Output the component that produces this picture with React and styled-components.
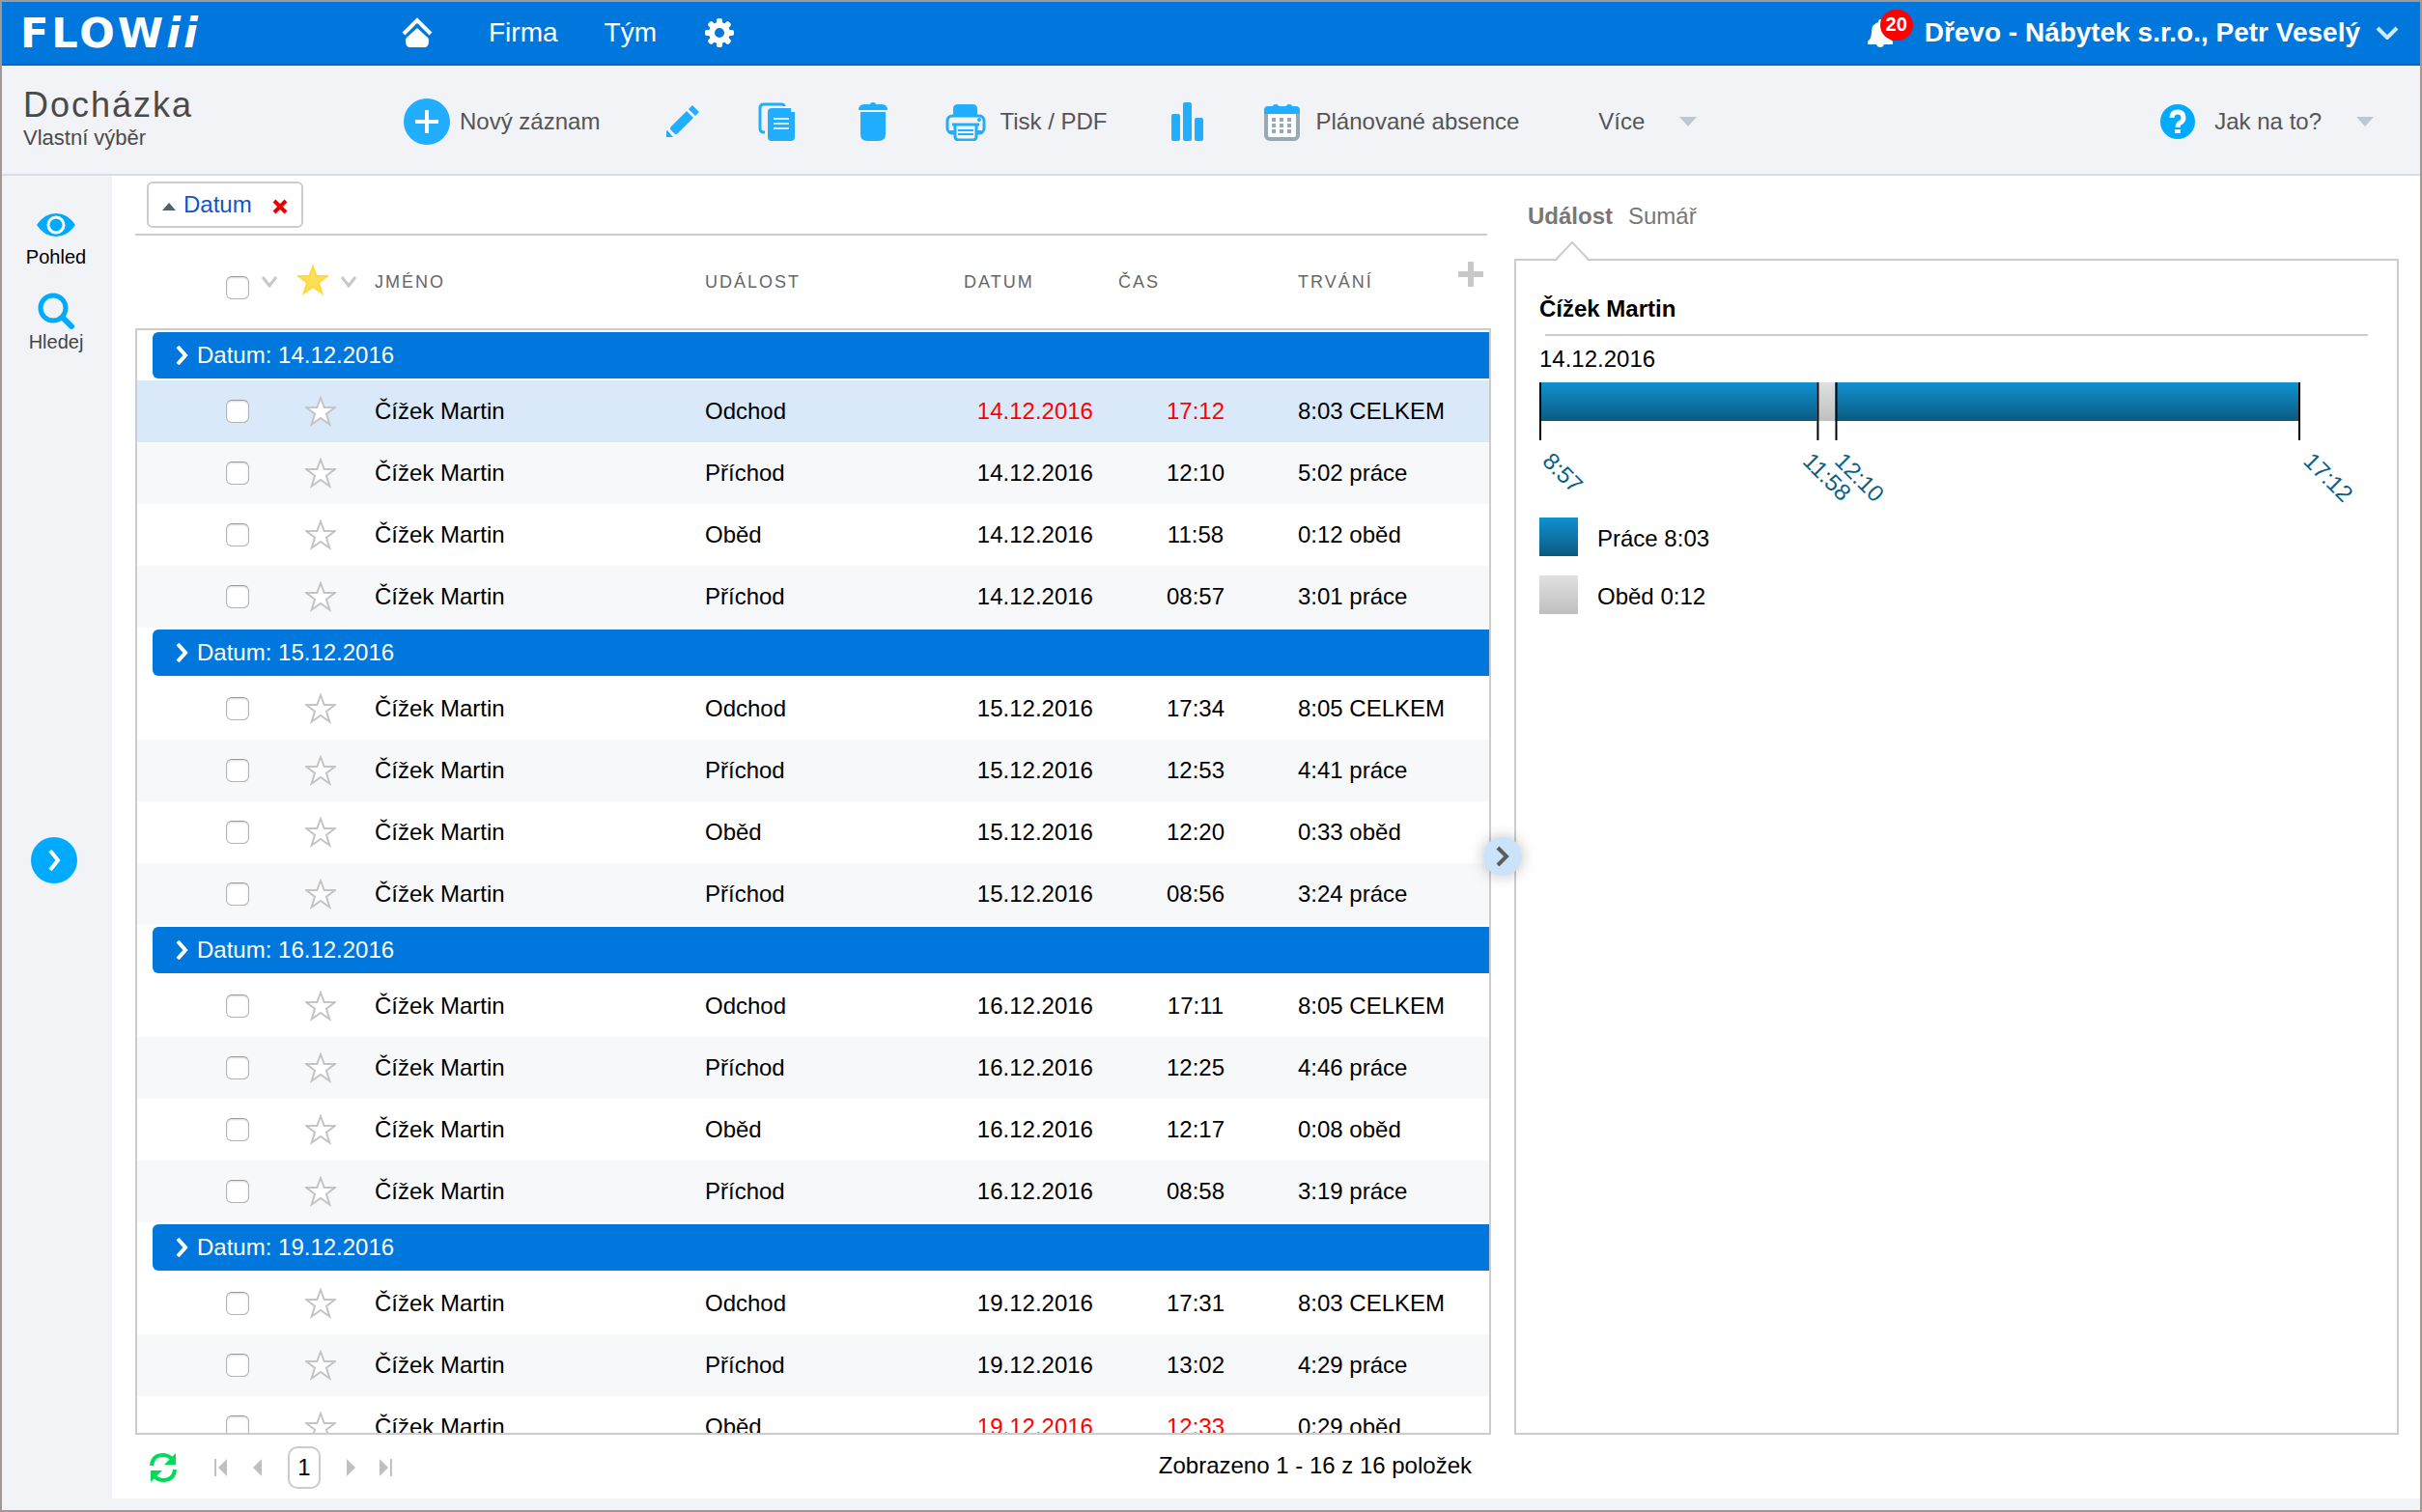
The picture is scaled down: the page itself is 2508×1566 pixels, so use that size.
import React from "react";
import styled, { createGlobalStyle } from "styled-components";

const GlobalStyle = createGlobalStyle`
  *, *::before, *::after { box-sizing: border-box; }
  body {
    margin: 0;
    font-family: "Liberation Sans", Arial, Helvetica, sans-serif;
    font-size: 24px;
    line-height: 28px;
    color: #000;
    background: #f1f3f7;
  }
  button, input { font: inherit; color: inherit; }
  a { color: inherit; text-decoration: none; }
  svg { display: block; flex: none; }
`;

const PlainButton = styled.button`
  display: flex;
  align-items: center;
  gap: ${(p) => p.$gap || 0}px;
  margin: 0;
  padding: 0;
  border: 0;
  background: none;
  text-align: left;
  white-space: nowrap;
  cursor: pointer;
`;

const Frame = styled.div`
  display: flex;
  flex-direction: column;
  height: 100vh;
  border: 2px solid #a09896;
  overflow: hidden;
`;

/* ---------- top bar ---------- */

const TopBar = styled.header`
  flex: none;
  display: flex;
  align-items: center;
  height: 66px;
  padding: 0 22px 0 20px;
  background: #0077dd;
  border-bottom: 2px solid #0068c8;
  color: #fff;
  font-size: 28px;
  line-height: 32px;
`;

const LogoLink = styled.a`
  flex: none;
  width: 394px;
`;

const MainNav = styled.nav`
  display: flex;
  align-items: center;
  flex: 1;
`;

const NavLink = styled.a`
  margin-right: ${(p) => p.$after}px;
`;

const Account = styled.div`
  display: flex;
  align-items: center;
  font-weight: bold;
`;

const BellButton = styled(PlainButton)`
  position: relative;
  width: 60px;
  height: 44px;
`;

const Badge = styled.span`
  position: absolute;
  left: 14px;
  top: -2px;
  width: 34px;
  height: 32px;
  border-radius: 16px;
  background: #ff0000;
  font-size: 20px;
  line-height: 30px;
  text-align: center;
`;

/* ---------- tool bar ---------- */

const ToolBar = styled.div`
  flex: none;
  display: flex;
  align-items: center;
  height: 114px;
  padding: 4px 48px 0 22px;
  background: #f1f3f7;
  border-bottom: 2px solid #d5dfea;
  color: #555;
`;

const PageTitle = styled.div`
  width: 394px;
  padding-bottom: 6px;
  color: #4a4a4a;
`;

const Title = styled.h1`
  margin: 0;
  font-size: 36px;
  line-height: 40px;
  font-weight: normal;
  letter-spacing: 2px;
`;

const Subtitle = styled.div`
  font-size: 22px;
  line-height: 28px;
`;

const Tools = styled.div`
  display: flex;
  align-items: center;
  flex: 1;
`;

const Tool = styled(PlainButton)`
  margin-right: ${(p) => p.$after || 0}px;
`;

const HelpLabel = styled.span`
  display: flex;
  align-items: center;
  gap: 20px;
`;

/* ---------- page body ---------- */

const Body = styled.div`
  flex: 1;
  min-height: 0;
  display: flex;
  padding-bottom: 12px;
  background: #f1f3f7;
`;

const SideBar = styled.aside`
  position: relative;
  flex: none;
  width: 114px;
  padding: 38px 2px 0 0;
  display: flex;
  flex-direction: column;
  align-items: center;
  gap: 24px;
`;

const SideItem = styled(PlainButton)`
  flex-direction: column;
  justify-content: space-between;
  height: ${(p) => p.$height}px;
  color: ${(p) => p.$color};
  font-size: 20px;
  line-height: 24px;
`;

const RoundToggle = styled.button`
  position: absolute;
  top: 50%;
  left: ${(p) => p.$left};
  display: flex;
  align-items: center;
  justify-content: center;
  width: ${(p) => p.$size}px;
  height: ${(p) => p.$size}px;
  padding: 0;
  border: 0;
  border-radius: 50%;
  background: ${(p) => p.$bg};
  box-shadow: ${(p) => p.$shadow || "none"};
  cursor: pointer;
`;

const Content = styled.main`
  flex: 1;
  min-width: 0;
  display: flex;
  padding: 0 22px 0 24px;
  background: #fff;
`;

const ListPane = styled.section`
  flex: 1404 1 0;
  min-width: 0;
  display: flex;
  flex-direction: column;
`;

const Divider = styled.div`
  position: relative;
  flex: none;
  width: 24px;
`;

const GroupBar = styled.div`
  flex: none;
  height: 62px;
  margin-right: 4px;
  padding: 6px 12px;
  border-bottom: 2px solid #ccc;
`;

const Chip = styled.div`
  display: flex;
  align-items: center;
  width: 162px;
  height: 48px;
  padding: 4px 14px 0;
  border: 2px solid #ccc;
  border-radius: 6px;
`;

const ChipLabel = styled.a`
  flex: 1;
  margin-left: 8px;
  padding-bottom: 4px;
  color: #1155cc;
`;

const Table = styled.table`
  width: 100%;
  table-layout: fixed;
  border-collapse: collapse;
`;

const Col = styled.col`
  width: ${(p) => (p.$w ? `${p.$w}px` : "auto")};
`;

const HeadBox = styled.div`
  flex: none;
  height: 96px;
  padding: 0 2px;
`;

const HeadCell = styled.th`
  height: 96px;
  padding: 0;
  font-size: 18px;
  line-height: 24px;
  font-weight: normal;
  letter-spacing: 2px;
  text-align: left;
  color: #666;
`;

const HeadControls = styled.div`
  display: flex;
  align-items: ${(p) => p.$align};
  gap: 12px;
  height: 36px;
`;

const HeadMenu = styled(PlainButton)`
  align-self: center;
`;

const HeadLast = styled.div`
  display: flex;
  align-items: center;
  justify-content: space-between;
  padding-right: 6px;
`;

const AddColumn = styled(PlainButton)`
  padding-bottom: 16px;
`;

const Rows = styled.div`
  flex: 1;
  min-height: 0;
  overflow: hidden;
  border: 2px solid #ccc;
`;

const GroupCell = styled.td`
  height: 52px;
  padding: 2px 0 2px 16px;
`;

const GroupButton = styled(PlainButton)`
  width: 100%;
  height: 48px;
  padding-left: 24px;
  border-radius: 6px 0 0 6px;
  background: #0077dd;
  color: #fff;
`;

const Row = styled.tr`
  height: 64px;
  background: ${(p) => (p.$selected ? "#d9e9f9" : p.$odd ? "#fff" : "#f7f8fa")};
`;

const Cell = styled.td`
  padding: 0;
  padding-right: ${(p) => p.$right || 0}px;
  text-align: ${(p) => p.$align || "left"};
  color: ${(p) => (p.$alert ? "#ff0000" : "#000")};
  white-space: nowrap;
`;

const Check = styled.input`
  appearance: none;
  display: block;
  width: 24px;
  height: 24px;
  margin: 0;
  border: 1px solid #b4b4b4;
  border-top-color: #999;
  border-radius: 6px;
  background: #fff;
  box-shadow: inset 0 1px 2px rgba(0, 0, 0, 0.15);
`;

const Footer = styled.footer`
  flex: none;
  display: flex;
  align-items: center;
  height: 66px;
  padding: 2px 20px 0 14px;
`;

const Pager = styled.nav`
  display: flex;
  align-items: center;
  flex: 1;
  margin-left: 38px;
`;

const PageBox = styled(PlainButton)`
  justify-content: center;
  width: 34px;
  height: 44px;
  margin: 0 26px;
  border: 2px solid #ccc;
  border-radius: 10px;
`;

const Count = styled.div`
  padding-bottom: 4px;
`;

/* ---------- detail pane ---------- */

const DetailPane = styled.section`
  flex: 916 1 0;
  min-width: 0;
  display: flex;
  flex-direction: column;
  padding-bottom: 66px;
`;

const Tabs = styled.div`
  flex: none;
  display: flex;
  gap: 16px;
  height: 86px;
  padding: 28px 14px 0;
`;

const Tab = styled(PlainButton)`
  position: relative;
  height: 28px;
  color: #777;
  font-weight: ${(p) => (p.$active ? "bold" : "normal")};
`;

const Notch = styled.svg`
  position: absolute;
  left: 50%;
  top: 40px;
  margin-left: -16px;
`;

const Detail = styled.div`
  flex: 1;
  min-height: 0;
  border: 2px solid #ccc;
  padding: 36px 30px 0 24px;
`;

const PersonName = styled.h2`
  margin: 0;
  padding-bottom: 12px;
  font-size: 24px;
  line-height: 28px;
`;

const Rule = styled.hr`
  margin: 0 0 0 6px;
  border: 0;
  border-top: 2px solid #ccc;
`;

const Day = styled.div`
  padding: 10px 0;
`;

const ChartBox = styled.div`
  height: 140px;
  padding-right: 72px;
`;

const Legend = styled.ul`
  display: flex;
  flex-direction: column;
  gap: 20px;
  margin: 0;
  padding: 0;
  list-style: none;
`;

const LegendItem = styled.li`
  display: flex;
  align-items: center;
  gap: 20px;
  height: 40px;
`;

const Swatch = styled.span`
  width: 40px;
  height: 40px;
  background: ${(p) => p.$fill};
`;

const LegendLabel = styled.span`
  padding-top: 4px;
`;

/* ---------- icons ---------- */

const Star = ({ filled }) => (
  <svg width="32" height="32" viewBox="0 0 32 32">
    <path
      d="M16 2l3.700 10H31l-9 6.600 3.300 11L16 23l-9.300 6.600L10 18.600 1 12h11.300z"
      fill={filled ? "#ffdf5a" : "#fff"}
      stroke={filled ? "#ffd83e" : "#c4c4c4"}
      strokeWidth="2"
    />
  </svg>
);

const Chevron = ({ w, h, d, color, sw }) => (
  <svg width={w} height={h} viewBox={`0 0 ${w} ${h}`}>
    <path d={d} fill="none" stroke={color} strokeWidth={sw} />
  </svg>
);

const DownMark = ({ label }) => (
  <HeadMenu aria-label={label}>
    <Chevron w={18} h={12} d="M2 1l7 9 7-9" color="#c8c8c8" sw={3} />
  </HeadMenu>
);

const DropTriangle = () => (
  <svg width="18" height="10" viewBox="0 0 18 10">
    <path d="M0 0h18L9 10z" fill="#bcc8d0" />
  </svg>
);

const Logo = () => (
  <svg width="230" height="60" viewBox="0 0 230 60" role="img" aria-label="FLOWii">
    <text
      x="-1"
      y="45"
      fill="#fff"
      fontFamily="DejaVu Sans, sans-serif"
      fontWeight="bold"
      fontSize="43"
      letterSpacing="3"
    >
      FLOW<tspan fontStyle="oblique">ii</tspan>
    </text>
  </svg>
);

const HomeIcon = () => (
  <svg width="32" height="32" viewBox="0 0 32 32">
    <path d="M2 17L16 3l14 14" fill="none" stroke="#fff" strokeWidth="4" />
    <path d="M16 11l11 10q1 1 1 3 0 7-4 7H8q-4 0-4-7 0-2 1-3z" fill="#fff" />
  </svg>
);

const GearIcon = () => (
  <svg width="30" height="32" viewBox="-15 -16 30 32">
    {[0, 45, 90, 135, 180, 225, 270, 315].map((a) => (
      <rect key={a} x="-3" y="-15" width="6" height="8" rx="2" fill="#fff" transform={`rotate(${a})`} />
    ))}
    <circle r="8" fill="none" stroke="#fff" strokeWidth="6" />
  </svg>
);

const BellIcon = () => (
  <svg width="28" height="32" viewBox="0 0 28 32">
    <path d="M14 2q2 0 2 3 7 2 7 10 0 7 4 10v3H1v-3q4-3 4-10 0-8 7-10 0-3 2-3z" fill="#fff" />
    <path d="M10 28h8q-1 3-4 3t-4-3z" fill="#fff" />
  </svg>
);

const PlusCircle = () => (
  <svg width="48" height="48" viewBox="0 0 48 48">
    <circle cx="24" cy="24" r="24" fill="#22aeff" />
    <path d="M24 12v24M12 24h24" stroke="#fff" strokeWidth="4" />
  </svg>
);

const PencilIcon = () => (
  <svg width="36" height="36" viewBox="0 0 36 36">
    <path d="M22 7l7 7L13 30q-2 2-4 0l-3-3q-2-2 0-4zM24 5l4-4 7 7-4 4zM2 27l6 7H1v-5q0-2 1-2z" fill="#22aeff" />
  </svg>
);

const CopyIcon = () => (
  <svg width="40" height="40" viewBox="0 0 40 40">
    <path d="M7 31H6q-4 0-4-4V6q0-4 4-4h18q3 0 3 2" fill="none" stroke="#22aeff" strokeWidth="3" />
    <path d="M14 6h20v4h4v26q0 4-4 4H14q-4 0-4-4V10q0-4 4-4z" fill="#22aeff" />
    <path d="M16 17h16M16 22h16M16 27h16" stroke="#d3edff" strokeWidth="2" />
  </svg>
);

const TrashIcon = () => (
  <svg width="30" height="40" viewBox="0 0 30 40">
    <path d="M0 8q0-6 6-6h6q0-2 3-2t3 2h6q6 0 6 6zM2 10h26v23q0 7-7 7H9q-7 0-7-7z" fill="#22aeff" />
  </svg>
);

const PrinterIcon = () => (
  <svg width="42" height="40" viewBox="0 0 42 40">
    <path d="M8 14V7q0-5 5-5h15q5 0 5 5v7z" fill="#22aeff" />
    <rect x="2" y="14" width="38" height="18" rx="5" fill="#f1f3f7" stroke="#22aeff" strokeWidth="3" />
    <path d="M4 29h7v3H6zM31 29h7l-2 3h-5z" fill="#22aeff" />
    <path d="M7 23h28M10 24v11q0 4 4 4h14q4 0 4-4V24" fill="#f1f3f7" stroke="#22aeff" strokeWidth="3" />
    <path d="M13 29h16M13 33h16" stroke="#22aeff" strokeWidth="2" />
    <circle cx="35" cy="18" r="2" fill="#22aeff" />
  </svg>
);

const BarsIcon = () => (
  <svg width="34" height="40" viewBox="0 0 34 40" fill="#22aeff">
    <rect x="0" y="12" width="9" height="28" rx="2" />
    <rect x="12" y="0" width="9" height="40" rx="2" />
    <rect x="24" y="16" width="9" height="24" rx="2" />
  </svg>
);

const CalendarIcon = () => (
  <svg width="38" height="40" viewBox="0 0 38 40">
    <rect x="2" y="6" width="33" height="32" rx="4" fill="#fff" stroke="#94aab4" strokeWidth="4" />
    <path d="M0 12V8q0-4 4-4h5q0-2 3-2t3 2h8q0-2 3-2t3 2h4q4 0 4 4v4z" fill="#22aeff" />
    {[16, 22, 28].map((y) =>
      [8, 16, 24].map((x) => <rect key={`${x}-${y}`} x={x} y={y} width="4" height="4" fill="#94aab4" />)
    )}
  </svg>
);

const HelpIcon = () => (
  <svg width="36" height="36" viewBox="0 0 36 36">
    <circle cx="18" cy="18" r="18" fill="#00aaff" />
    <path d="M12 14q0-6 6-6t6 6q0 3-3 5-3 1-3 5" fill="none" stroke="#fff" strokeWidth="5" />
    <rect x="15" y="26" width="6" height="4" fill="#fff" />
  </svg>
);

const EyeIcon = () => (
  <svg width="40" height="26" viewBox="0 0 40 26">
    <path d="M0 13Q8 1 20 1t20 12q-8 12-20 12T0 13z" fill="#00aaff" />
    <circle cx="20" cy="13" r="8" fill="#00aaff" stroke="#fff" strokeWidth="3" />
  </svg>
);

const SearchIcon = () => (
  <svg width="40" height="40" viewBox="0 0 40 40">
    <circle cx="17" cy="17" r="13" fill="none" stroke="#00aaff" strokeWidth="5" />
    <path d="M27 27l9 9" stroke="#00aaff" strokeWidth="6" strokeLinecap="round" />
  </svg>
);

const SortUp = () => (
  <svg width="14" height="8" viewBox="0 0 14 8">
    <path d="M0 8l7-8 7 8z" fill="#4a6470" />
  </svg>
);

const RemoveIcon = () => (
  <svg width="16" height="16" viewBox="0 0 16 16">
    <path d="M2 2l12 12M14 2L2 14" stroke="#ee0000" strokeWidth="4" />
  </svg>
);

const AddIcon = () => (
  <svg width="26" height="26" viewBox="0 0 26 26">
    <path d="M13 0v26M0 13h26" stroke="#c8c8c8" strokeWidth="6" />
  </svg>
);

const RefreshIcon = () => (
  <svg width="30" height="32" viewBox="0 0 30 32">
    <path d="M3 14Q4 3 15 3q5 0 9 4M27 18q-1 11-12 11-5 0-9-4" fill="none" stroke="#00dc5a" strokeWidth="4" />
    <path d="M28 1v12H16zM2 31V19h12z" fill="#00dc5a" />
  </svg>
);

const PageArrow = ({ back, stop }) => (
  <svg width="14" height="18" viewBox="0 0 14 18">
    <g fill="#c0c0c0" transform={back ? "translate(14 0) scale(-1 1)" : undefined}>
      <path d="M1 0l9 9-9 9z" />
      {stop && <rect x="12" y="0" width="2" height="18" />}
    </g>
  </svg>
);

/* ---------- data ---------- */

const GROUPS = [
  {
    date: "14.12.2016",
    rows: [
      { event: "Odchod", time: "17:12", length: "8:03 CELKEM", selected: true, alert: true },
      { event: "Příchod", time: "12:10", length: "5:02 práce" },
      { event: "Oběd", time: "11:58", length: "0:12 oběd" },
      { event: "Příchod", time: "08:57", length: "3:01 práce" },
    ],
  },
  {
    date: "15.12.2016",
    rows: [
      { event: "Odchod", time: "17:34", length: "8:05 CELKEM" },
      { event: "Příchod", time: "12:53", length: "4:41 práce" },
      { event: "Oběd", time: "12:20", length: "0:33 oběd" },
      { event: "Příchod", time: "08:56", length: "3:24 práce" },
    ],
  },
  {
    date: "16.12.2016",
    rows: [
      { event: "Odchod", time: "17:11", length: "8:05 CELKEM" },
      { event: "Příchod", time: "12:25", length: "4:46 práce" },
      { event: "Oběd", time: "12:17", length: "0:08 oběd" },
      { event: "Příchod", time: "08:58", length: "3:19 práce" },
    ],
  },
  {
    date: "19.12.2016",
    rows: [
      { event: "Odchod", time: "17:31", length: "8:03 CELKEM" },
      { event: "Příchod", time: "13:02", length: "4:29 práce" },
      { event: "Oběd", time: "12:33", length: "0:29 oběd", alert: true },
    ],
  },
];

const WORK = "linear-gradient(#0f92d1, #0b5a80)";
const LUNCH = "linear-gradient(#e0e0e0, #bfbfbf)";

const START = 8 * 60 + 57;
const SPAN = 17 * 60 + 12 - START;
const at = (h, m) => `${((h * 60 + m - START) / SPAN) * 100}%`;
const part = (minutes) => `${(minutes / SPAN) * 100}%`;

const TICKS = [
  { label: "8:57", x: at(8, 57), dx: 2 },
  { label: "11:58", x: at(11, 58), dx: -16 },
  { label: "12:10", x: at(12, 10), dx: -2 },
  { label: "17:12", x: at(17, 12), dx: 4 },
];

const HEAD_WIDTHS = [92, 74, 80, null, 268, 160, 186, 198];
const ROW_WIDTHS = [92, 82, 72, null, 268, 160, 186, 198];

const Columns = ({ widths }) => (
  <colgroup>
    {widths.map((w, i) => (
      <Col key={i} $w={w} />
    ))}
  </colgroup>
);

const DayChart = () => (
  <svg width="100%" height="140" overflow="visible" role="img" aria-label="14.12.2016">
    <defs>
      <linearGradient id="work" x1="0" y1="0" x2="0" y2="1">
        <stop offset="0" stopColor="#0f92d1" />
        <stop offset="1" stopColor="#0b5a80" />
      </linearGradient>
      <linearGradient id="lunch" x1="0" y1="0" x2="0" y2="1">
        <stop offset="0" stopColor="#e0e0e0" />
        <stop offset="1" stopColor="#bfbfbf" />
      </linearGradient>
    </defs>
    <rect x="0" y="0" width={part(181)} height="40" fill="url(#work)" />
    <rect x={at(11, 58)} y="0" width={part(12)} height="40" fill="url(#lunch)" />
    <rect x={at(12, 10)} y="0" width={part(302)} height="40" fill="url(#work)" />
    {TICKS.map((t) => (
      <svg key={t.label} x={t.x} y="0" overflow="visible">
        <rect x="0" y="0" width="2" height="60" fill="#000" />
        <text
          transform={`translate(${t.dx} 83) rotate(45)`}
          fontFamily="Liberation Sans, Arial, sans-serif"
          fontSize="24"
          fill="#0b5f86"
        >
          {t.label}
        </text>
      </svg>
    ))}
  </svg>
);

function AttendanceTable() {
  return (
    <Table>
      <Columns widths={ROW_WIDTHS} />
      <tbody>
        {GROUPS.map((g) => (
          <React.Fragment key={g.date}>
            <tr>
              <GroupCell colSpan={8}>
                <GroupButton $gap={8}>
                  <Chevron w={14} h={20} d="M2 1l8 9-8 9" color="#fff" sw={4} />
                  Datum: {g.date}
                </GroupButton>
              </GroupCell>
            </tr>
            {g.rows.map((r, i) => (
              <Row key={r.time} $selected={r.selected} $odd={i % 2 === 0}>
                <Cell />
                <Cell>
                  <Check type="checkbox" aria-label={`${r.event} ${g.date} ${r.time}`} />
                </Cell>
                <Cell>
                  <PlainButton aria-label="Oblíbené">
                    <Star />
                  </PlainButton>
                </Cell>
                <Cell>Čížek Martin</Cell>
                <Cell>{r.event}</Cell>
                <Cell $align="right" $right={26} $alert={r.alert}>{g.date}</Cell>
                <Cell $align="center" $right={26} $alert={r.alert}>{r.time}</Cell>
                <Cell>{r.length}</Cell>
              </Row>
            ))}
          </React.Fragment>
        ))}
      </tbody>
    </Table>
  );
}

export default function App() {
  return (
    <>
      <GlobalStyle />
      <Frame>
        <TopBar>
          <LogoLink href="#">
            <Logo />
          </LogoLink>
          <MainNav>
            <NavLink href="#" $after={58} aria-label="Domů">
              <HomeIcon />
            </NavLink>
            <NavLink href="#" $after={48}>Firma</NavLink>
            <NavLink href="#" $after={50}>Tým</NavLink>
            <NavLink href="#" aria-label="Nastavení">
              <GearIcon />
            </NavLink>
          </MainNav>
          <Account>
            <BellButton aria-label="Oznámení 20">
              <BellIcon />
              <Badge>20</Badge>
            </BellButton>
            <PlainButton $gap={16}>
              Dřevo - Nábytek s.r.o., Petr Veselý
              <Chevron w={24} h={14} d="M2 2l10 10L22 2" color="#d3e8fb" sw={4} />
            </PlainButton>
          </Account>
        </TopBar>

        <ToolBar>
          <PageTitle>
            <Title>Docházka</Title>
            <Subtitle>Vlastní výběr</Subtitle>
          </PageTitle>
          <Tools>
            <Tool $gap={10} $after={68}>
              <PlusCircle />
              Nový záznam
            </Tool>
            <Tool $after={60} aria-label="Upravit">
              <PencilIcon />
            </Tool>
            <Tool $after={64} aria-label="Kopírovat">
              <CopyIcon />
            </Tool>
            <Tool $after={60} aria-label="Smazat">
              <TrashIcon />
            </Tool>
            <Tool $gap={14} $after={66}>
              <PrinterIcon />
              Tisk / PDF
            </Tool>
            <Tool $after={62} aria-label="Graf">
              <BarsIcon />
            </Tool>
            <Tool $gap={16} $after={82}>
              <CalendarIcon />
              Plánované absence
            </Tool>
            <Tool $gap={36}>
              Více
              <DropTriangle />
            </Tool>
          </Tools>
          <PlainButton $gap={36}>
            <HelpLabel>
              <HelpIcon />
              Jak na to?
            </HelpLabel>
            <DropTriangle />
          </PlainButton>
        </ToolBar>

        <Body>
          <SideBar>
            <SideItem $height={58} $color="#000">
              <EyeIcon />
              Pohled
            </SideItem>
            <SideItem $height={64} $color="#444">
              <SearchIcon />
              Hledej
            </SideItem>
            <RoundToggle $left="30px" $size={48} $bg="#00aaff" aria-label="Rozbalit panel">
              <Chevron w={14} h={24} d="M3 2l8 10-8 10" color="#fff" sw={4} />
            </RoundToggle>
          </SideBar>

          <Content>
            <ListPane>
              <GroupBar>
                <Chip>
                  <SortUp />
                  <ChipLabel href="#">Datum</ChipLabel>
                  <PlainButton aria-label="Zrušit seskupení">
                    <RemoveIcon />
                  </PlainButton>
                </Chip>
              </GroupBar>
              <HeadBox>
                <Table>
                  <Columns widths={HEAD_WIDTHS} />
                  <thead>
                    <tr>
                      <HeadCell />
                      <HeadCell>
                        <HeadControls $align="flex-end">
                          <Check type="checkbox" aria-label="Vybrat vše" />
                          <DownMark label="Možnosti výběru" />
                        </HeadControls>
                      </HeadCell>
                      <HeadCell>
                        <HeadControls $align="flex-start">
                          <Star filled />
                          <DownMark label="Možnosti oblíbených" />
                        </HeadControls>
                      </HeadCell>
                      <HeadCell>JMÉNO</HeadCell>
                      <HeadCell>UDÁLOST</HeadCell>
                      <HeadCell>DATUM</HeadCell>
                      <HeadCell>ČAS</HeadCell>
                      <HeadCell>
                        <HeadLast>
                          TRVÁNÍ
                          <AddColumn aria-label="Přidat sloupec">
                            <AddIcon />
                          </AddColumn>
                        </HeadLast>
                      </HeadCell>
                    </tr>
                  </thead>
                </Table>
              </HeadBox>
              <Rows>
                <AttendanceTable />
              </Rows>
              <Footer>
                <PlainButton aria-label="Obnovit">
                  <RefreshIcon />
                </PlainButton>
                <Pager>
                  <PlainButton $gap={22} aria-label="Předchozí stránky">
                    <PageArrow back stop />
                    <PageArrow back />
                  </PlainButton>
                  <PageBox>1</PageBox>
                  <PlainButton $gap={20} aria-label="Další stránky">
                    <PageArrow />
                    <PageArrow stop />
                  </PlainButton>
                </Pager>
                <Count>Zobrazeno 1 - 16 z 16 položek</Count>
              </Footer>
            </ListPane>

            <Divider>
              <RoundToggle
                $left="-8px"
                $size={40}
                $bg="#cbe3f8"
                $shadow="0 0 16px rgba(0, 0, 0, 0.25)"
                aria-label="Skrýt detail"
              >
                <Chevron w={16} h={24} d="M3 3l9 9-9 9" color="#5c5c5c" sw={4} />
              </RoundToggle>
            </Divider>

            <DetailPane>
              <Tabs>
                <Tab $active>
                  Událost
                  <Notch width="36" height="22" viewBox="0 0 36 22">
                    <path d="M0 22L18 2l18 20z" fill="#fff" />
                    <path d="M0 20L18 1l18 19" fill="none" stroke="#ccc" strokeWidth="2" />
                  </Notch>
                </Tab>
                <Tab>Sumář</Tab>
              </Tabs>
              <Detail>
                <PersonName>Čížek Martin</PersonName>
                <Rule />
                <Day>14.12.2016</Day>
                <ChartBox>
                  <DayChart />
                </ChartBox>
                <Legend>
                  <LegendItem>
                    <Swatch $fill={WORK} />
                    <LegendLabel>Práce 8:03</LegendLabel>
                  </LegendItem>
                  <LegendItem>
                    <Swatch $fill={LUNCH} />
                    <LegendLabel>Oběd 0:12</LegendLabel>
                  </LegendItem>
                </Legend>
              </Detail>
            </DetailPane>
          </Content>
        </Body>
      </Frame>
    </>
  );
}
